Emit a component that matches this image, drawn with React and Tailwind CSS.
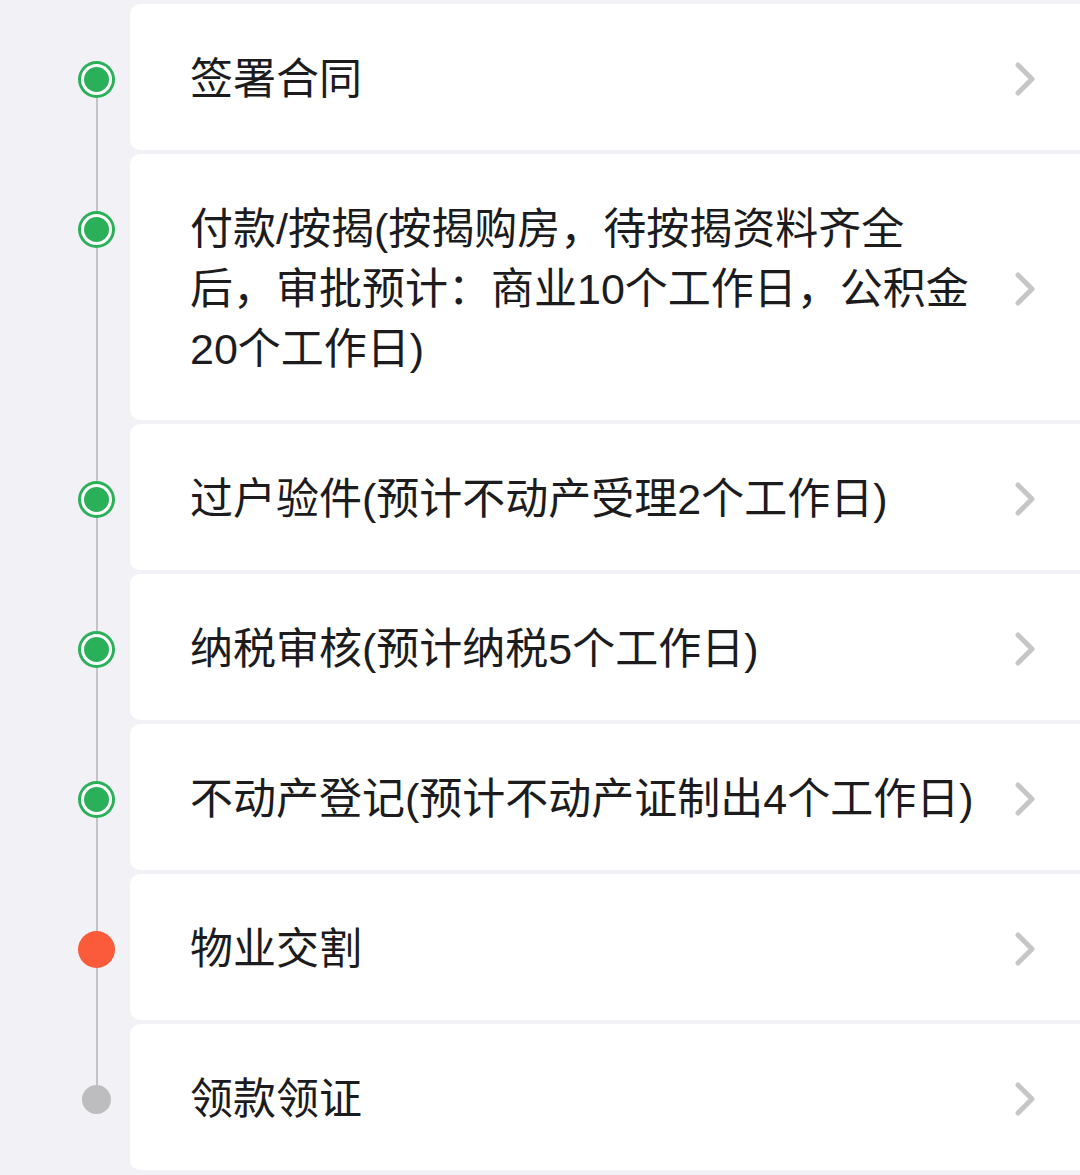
import React from 'react';

const steps = [
  { title: '签署合同', status: 'done' },
  { title: '付款/按揭(按揭购房，待按揭资料齐全后，审批预计：商业10个工作日，公积金20个工作日)', status: 'done' },
  { title: '过户验件(预计不动产受理2个工作日)', status: 'done' },
  { title: '纳税审核(预计纳税5个工作日)', status: 'done' },
  { title: '不动产登记(预计不动产证制出4个工作日)', status: 'done' },
  { title: '物业交割', status: 'current' },
  { title: '领款领证', status: 'todo' },
];

function Dot({ status }) {
  if (status === 'done') {
    return (
      <div className="w-[37px] h-[37px] shrink-0 rounded-full bg-[#2bb05a] p-[3px]">
        <div className="w-full h-full rounded-full bg-white p-[3px]">
          <div className="w-full h-full rounded-full bg-[#2bb05a]" />
        </div>
      </div>
    );
  }
  if (status === 'current') {
    return <div className="w-[37px] h-[37px] shrink-0 rounded-full bg-[#fb5a3b]" />;
  }
  return <div className="w-[29px] h-[29px] shrink-0 rounded-full bg-[#bdbdbf]" />;
}

function Chevron() {
  return (
    <svg width="22" height="36" viewBox="0 0 22 36" className="shrink-0">
      <path d="M4 4 L18 18 L4 32" fill="none" stroke="#c6c6c8" strokeWidth="5" strokeLinecap="round" strokeLinejoin="round" />
    </svg>
  );
}

export default function App() {
  return (
    <div
      className="min-h-[1175px] bg-[#f1f1f6] pt-[2px] overflow-hidden"
      style={{ fontFamily: '"Liberation Sans", "Noto Sans CJK SC", sans-serif' }}
    >
      {steps.map((s, i) => {
        const first = i === 0;
        const last = i === steps.length - 1;
        const topH = s.status === 'todo' ? 'h-[63px]' : 'h-[59px]';
        return (
          <div key={i} className="flex">
            {/* timeline */}
            <div className="w-[130px] shrink-0 pl-[78px]">
              <div className="w-[37px] h-full flex flex-col items-center">
                <div className={`${topH} w-[2px] ${first ? 'bg-transparent' : 'bg-[#c4c4c6]'}`} />
                <Dot status={s.status} />
                <div className={`flex-1 w-[2px] ${last ? 'bg-transparent' : 'bg-[#c4c4c6]'}`} />
              </div>
            </div>
            {/* card */}
            <div className="flex-1 py-[2px]">
              <div className="flex items-center bg-white rounded-l-[10px] pl-[60px] pr-[44px] pt-[45px] pb-[41px]">
                <div className="flex-1 text-[43px] leading-[60px] text-[#1c1c1e] pr-[30px]">
                  {s.title}
                </div>
                <Chevron />
              </div>
            </div>
          </div>
        );
      })}
    </div>
  );
}
